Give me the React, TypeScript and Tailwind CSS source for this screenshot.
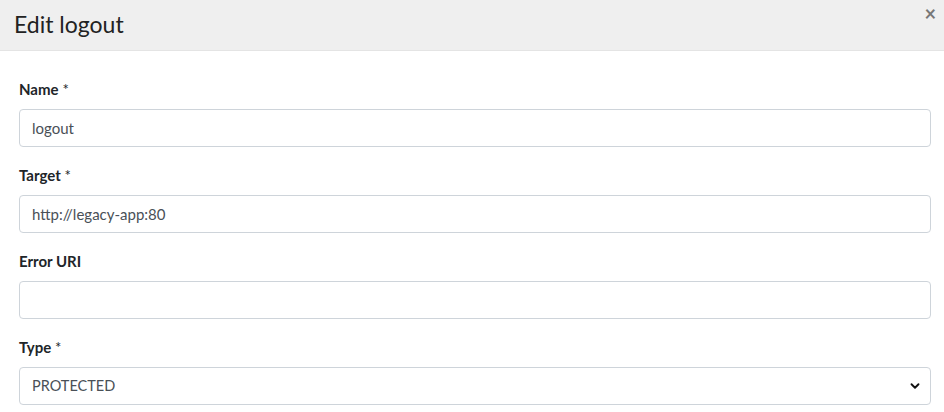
import { ChevronDown } from 'lucide-react';

const fields = [
  { label: 'Name', required: true, value: 'logout' },
  { label: 'Target', required: true, value: 'http://legacy-app:80' },
  { label: 'Error URI', required: false, value: '' },
];

export default function App() {
  return (
    <div className="w-[944px] h-[412px] overflow-hidden bg-white font-['Lato',sans-serif] text-[#212529]">
      {/* Modal header */}
      <div className="relative h-[51px] bg-[#efefef] border-b border-[#e4e4e4] px-[14px] flex items-center">
        <h4 className="text-[23px] leading-none text-[#222] pb-[2px]">Edit logout</h4>
        <button className="absolute right-[8px] top-[3px] text-[20px] font-bold leading-none text-[#777]">×</button>
      </div>

      {/* Modal body */}
      <div className="px-[19px] pt-[28px] w-[950px]">
        {fields.map((f) => (
          <div key={f.label} className="mb-[18px]">
            <label className="block text-[15px] leading-[21px] font-bold mb-[9px]">
              {f.label}
              {f.required && <span className="font-normal"> *</span>}
            </label>
            <input
              readOnly
              value={f.value}
              className="block w-[912px] h-[38px] px-[12px] text-[15px] text-[#495057] border border-[#ced4da] rounded-[4px] outline-none"
            />
          </div>
        ))}
        <div>
          <label className="block text-[15px] leading-[21px] font-bold mb-[9px]">
            Type<span className="font-normal"> *</span>
          </label>
          <div className="relative w-[912px] h-[38px] border border-[#ced4da] rounded-[4px] flex items-center px-[12px] text-[14.5px] text-[#495057]">
            PROTECTED
            <ChevronDown className="absolute right-[8px] top-[11px] w-[14px] h-[14px] text-[#111]" strokeWidth={3.2} />
          </div>
        </div>
      </div>
    </div>
  );
}
